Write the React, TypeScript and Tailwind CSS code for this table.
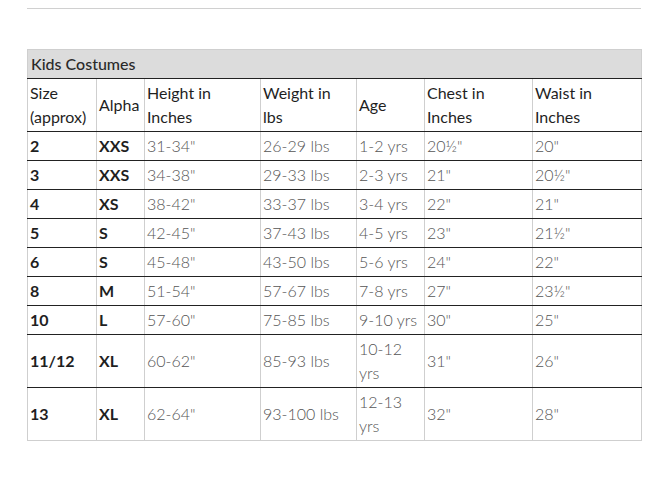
import React from 'react';

type Row = {
  size: string;
  alpha: string;
  height: string;
  weight: string;
  age: React.ReactNode;
  chest: string;
  waist: string;
  tall?: boolean;
};

const rows: Row[] = [
  { size: '2', alpha: 'XXS', height: '31-34"', weight: '26-29 lbs', age: '1-2 yrs', chest: '20½"', waist: '20"' },
  { size: '3', alpha: 'XXS', height: '34-38"', weight: '29-33 lbs', age: '2-3 yrs', chest: '21"', waist: '20½"' },
  { size: '4', alpha: 'XS', height: '38-42"', weight: '33-37 lbs', age: '3-4 yrs', chest: '22"', waist: '21"' },
  { size: '5', alpha: 'S', height: '42-45"', weight: '37-43 lbs', age: '4-5 yrs', chest: '23"', waist: '21½"' },
  { size: '6', alpha: 'S', height: '45-48"', weight: '43-50 lbs', age: '5-6 yrs', chest: '24"', waist: '22"' },
  { size: '8', alpha: 'M', height: '51-54"', weight: '57-67 lbs', age: '7-8 yrs', chest: '27"', waist: '23½"' },
  { size: '10', alpha: 'L', height: '57-60"', weight: '75-85 lbs', age: '9-10 yrs', chest: '30"', waist: '25"' },
  { size: '11/12', alpha: 'XL', height: '60-62"', weight: '85-93 lbs', age: <>10-12<br />yrs</>, chest: '31"', waist: '26"', tall: true },
  { size: '13', alpha: 'XL', height: '62-64"', weight: '93-100 lbs', age: <>12-13<br />yrs</>, chest: '32"', waist: '28"', tall: true },
];

const widths = ['w-[69px]', 'w-[48px]', 'w-[116px]', 'w-[96px]', 'w-[68px]', 'w-[108px]', 'w-[109px]'];

export default function App() {
  return (
    <div className="min-h-[482px] bg-white pt-[8px] font-['Lato','Open_Sans',sans-serif]">
      <div className="ml-[27px] w-[614px] h-px bg-[#d0d0d0]" />

      <table className="ml-[27px] mt-[40px] w-[614px] table-fixed border-collapse text-[16px] leading-[24px]">
        <colgroup>
          {widths.map((w, i) => <col key={i} className={w} />)}
        </colgroup>
        <tbody>
          <tr className="h-[29px]">
            <td colSpan={7} className="border border-[#cfcfcf] border-b-[#222] bg-[#dcdcdc] px-[3px] align-middle font-medium text-[#2a2a2a]">
              Kids Costumes
            </td>
          </tr>

          {/* 表头 */}
          <tr className="h-[53px] text-[#1f1f1f]">
            <td className="border border-[#cfcfcf] border-b-[#222] px-[2px] align-middle">Size<br />(approx)</td>
            <td className="border border-[#cfcfcf] border-b-[#222] px-[2px] align-middle">Alpha</td>
            <td className="border border-[#cfcfcf] border-b-[#222] px-[2px] align-middle">Height in<br />Inches</td>
            <td className="border border-[#cfcfcf] border-b-[#222] px-[2px] align-middle">Weight in<br />lbs</td>
            <td className="border border-[#cfcfcf] border-b-[#222] px-[2px] align-middle">Age</td>
            <td className="border border-[#cfcfcf] border-b-[#222] px-[2px] align-middle">Chest in<br />Inches</td>
            <td className="border border-[#cfcfcf] border-b-[#222] px-[2px] align-middle">Waist in<br />Inches</td>
          </tr>

          {rows.map((r, i) => {
            const last = i === rows.length - 1;
            const cell = `border border-[#cfcfcf] px-[2px] align-middle ${last ? 'border-b-[#cfcfcf]' : 'border-b-[#222]'}`;
            return (
              <tr key={i} className={r.tall ? 'h-[53px]' : 'h-[29px]'}>
                <td className={`${cell} font-bold text-[#1f1f1f]`}>{r.size}</td>
                <td className={`${cell} font-bold text-[#1f1f1f]`}>{r.alpha}</td>
                <td className={`${cell} font-light text-[#555]`}>{r.height}</td>
                <td className={`${cell} font-light text-[#555]`}>{r.weight}</td>
                <td className={`${cell} font-light text-[#555]`}>{r.age}</td>
                <td className={`${cell} font-light text-[#555]`}>{r.chest}</td>
                <td className={`${cell} font-light text-[#555]`}>{r.waist}</td>
              </tr>
            );
          })}
        </tbody>
      </table>
    </div>
  );
}
